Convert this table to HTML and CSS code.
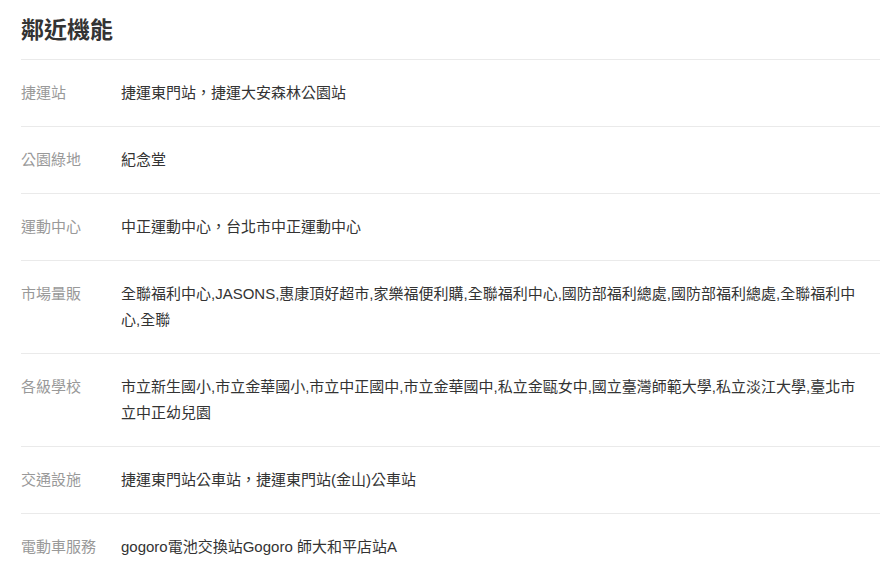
FILE: index.html
```html
<!DOCTYPE html>
<html lang="zh-TW">
  <head>
    <title>鄰近機能</title>
    <meta charset="utf-8" />
    <link rel="stylesheet" href="styles.css">
  </head>
  <body>
    <section class="jinneng">
      <h2 class="biaoti">鄰近機能</h2>
      <div class="hang">
        <div class="mingcheng">捷運站</div>
        <div class="neirong">捷運東門站，捷運大安森林公園站</div>
      </div>
      <div class="hang">
        <div class="mingcheng">公園綠地</div>
        <div class="neirong">紀念堂</div>
      </div>
      <div class="hang">
        <div class="mingcheng">運動中心</div>
        <div class="neirong">中正運動中心，台北市中正運動中心</div>
      </div>
      <div class="hang">
        <div class="mingcheng">市場量販</div>
        <div class="neirong">全聯福利中心,JASONS,惠康頂好超市,家樂福便利購,全聯福利中心,國防部福利總處,國防部福利總處,全聯福利中心,全聯</div>
      </div>
      <div class="hang">
        <div class="mingcheng">各級學校</div>
        <div class="neirong">市立新生國小,市立金華國小,市立中正國中,市立金華國中,私立金甌女中,國立臺灣師範大學,私立淡江大學,臺北市立中正幼兒園</div>
      </div>
      <div class="hang">
        <div class="mingcheng">交通設施</div>
        <div class="neirong">捷運東門站公車站，捷運東門站(金山)公車站</div>
      </div>
      <div class="hang">
        <div class="mingcheng">電動車服務</div>
        <div class="neirong">gogoro電池交換站Gogoro 師大和平店站A</div>
      </div>
    </section>
  </body>
</html>
```

FILE: styles.css
```css
body {
  margin: 0;
  background: #fff;
  font-family: "Liberation Sans", "Noto Sans CJK TC", sans-serif;
  color: #333;
}
.jinneng {
  width: 859px;
  padding-left: 21px;
}
.biaoti {
  margin: 0;
  padding: 18px 0 17px;
  font-size: 23px;
  line-height: 24px;
  font-weight: bold;
  color: #333;
  border-bottom: 1px solid #eaeaea;
}
.hang {
  display: flex;
  padding: 20px 0;
  border-bottom: 1px solid #eaeaea;
  font-size: 15px;
  line-height: 26px;
}
.mingcheng {
  flex: 0 0 100px;
  color: #999;
}
.neirong {
  flex: 1;
  padding-right: 22px;
  color: #333;
}
```
